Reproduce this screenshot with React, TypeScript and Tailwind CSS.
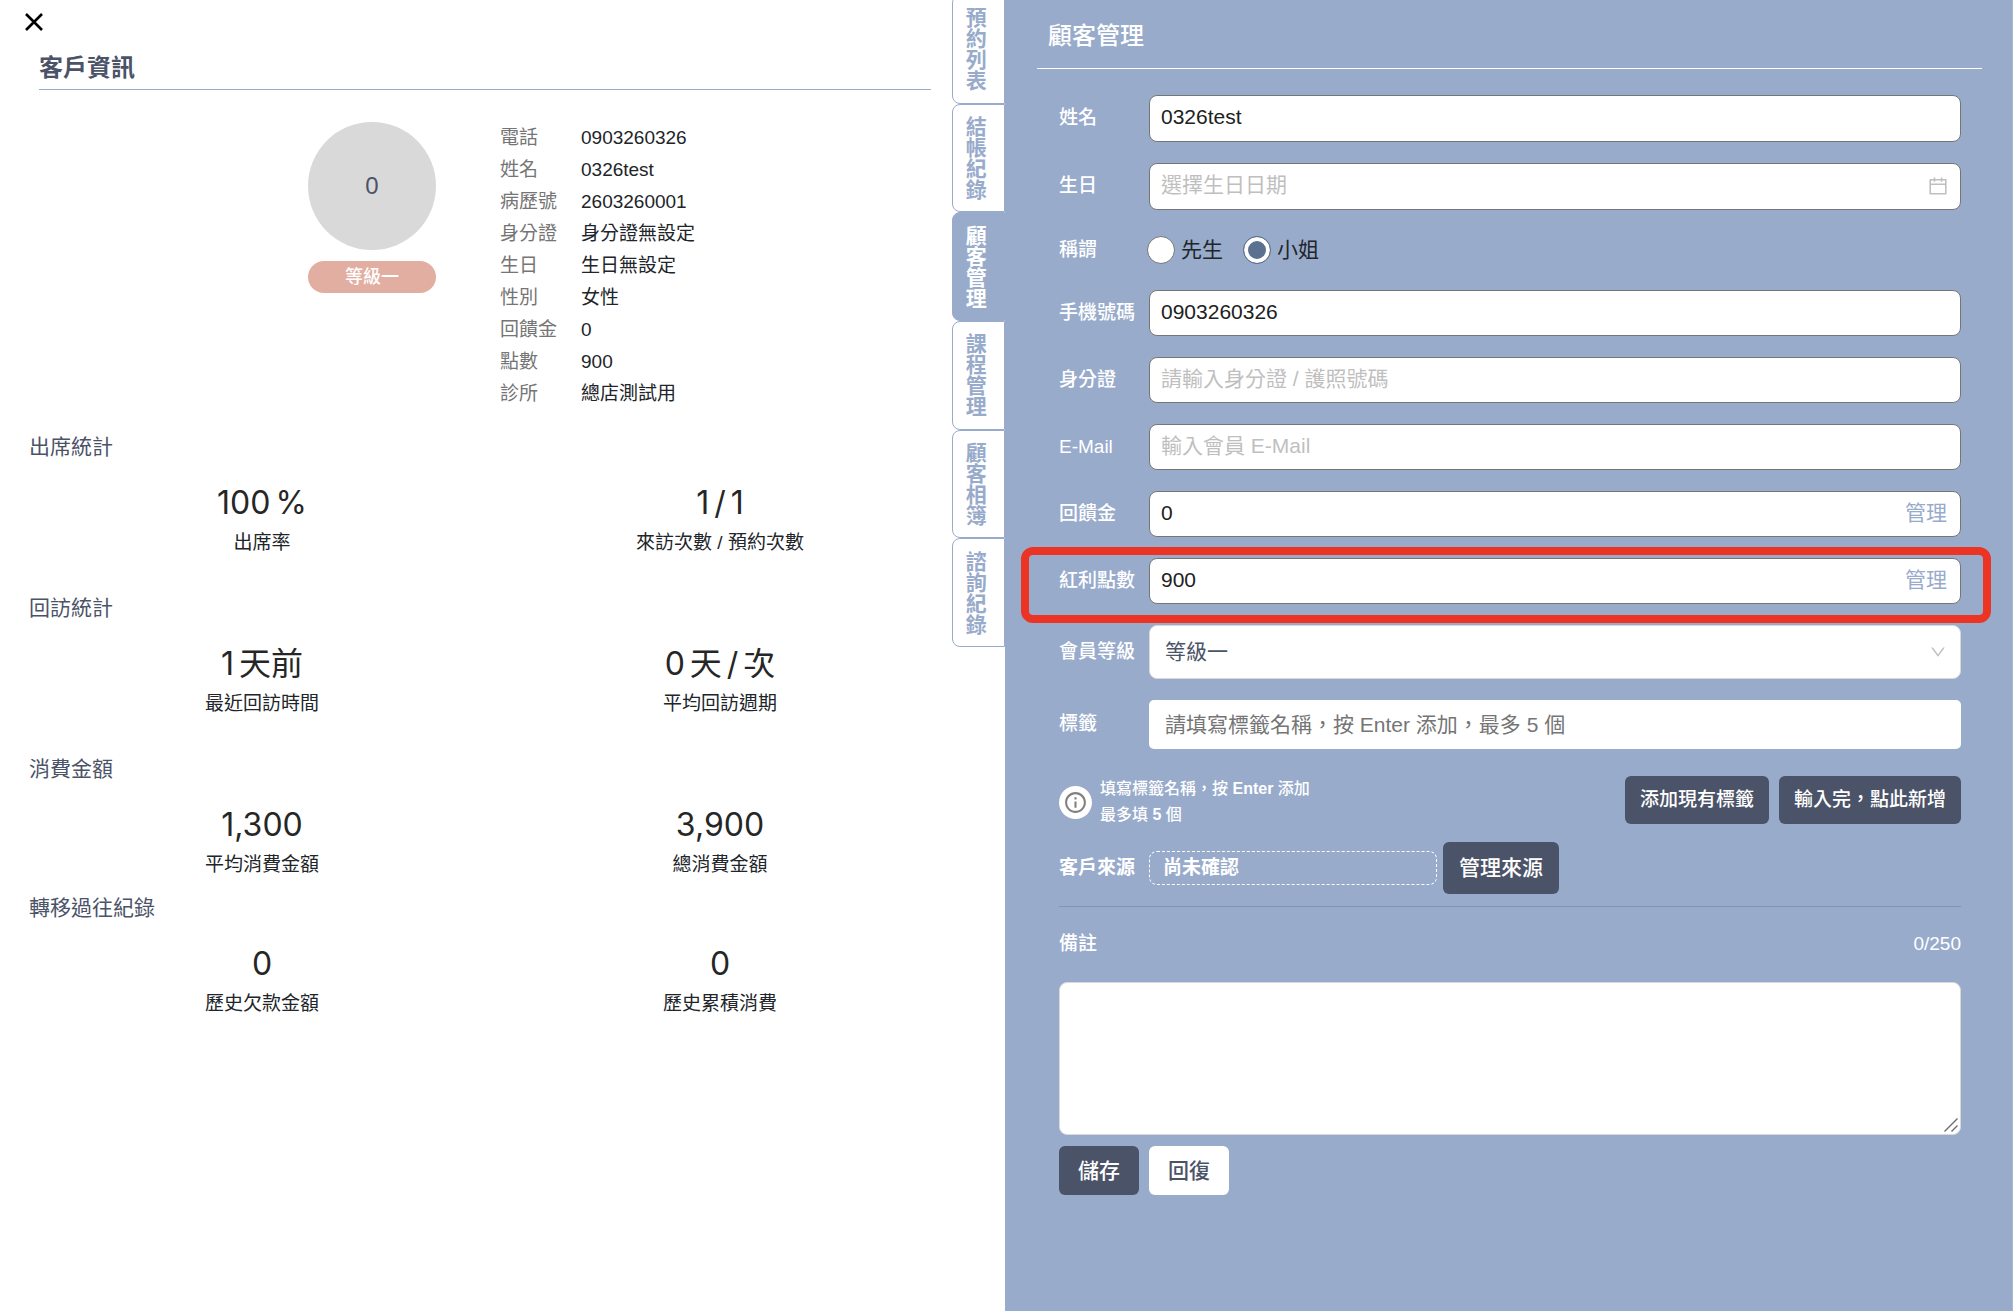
import { useState } from "react";
import type { ReactNode } from "react";
import { AiOutlineCalendar, AiOutlineDown } from "react-icons/ai";
import { MdInfoOutline } from "react-icons/md";

interface StatItem {
  value: string[];
  label: string;
}

interface StatSection {
  title: string;
  className: string;
  items: StatItem[];
}

const TABS = ["預約列表", "結帳紀錄", "顧客管理", "課程管理", "顧客相簿", "諮詢紀錄"];

const CUSTOMER_INFO = [
  { label: "電話", value: "0903260326" },
  { label: "姓名", value: "0326test" },
  { label: "病歷號", value: "2603260001" },
  { label: "身分證", value: "身分證無設定" },
  { label: "生日", value: "生日無設定" },
  { label: "性別", value: "女性" },
  { label: "回饋金", value: "0" },
  { label: "點數", value: "900" },
  { label: "診所", value: "總店測試用" },
];

const STATS: StatSection[] = [
  {
    title: "出席統計",
    className: "mt-[21px]",
    items: [
      { value: ["100", "%"], label: "出席率" },
      { value: ["1", "/", "1"], label: "來訪次數 / 預約次數" },
    ],
  },
  {
    title: "回訪統計",
    className: "mt-[33px]",
    items: [
      { value: ["1", "天前"], label: "最近回訪時間" },
      { value: ["0", "天", "/", "次"], label: "平均回訪週期" },
    ],
  },
  {
    title: "消費金額",
    className: "mt-[33px]",
    items: [
      { value: ["1,300"], label: "平均消費金額" },
      { value: ["3,900"], label: "總消費金額" },
    ],
  },
  {
    title: "轉移過往紀錄",
    className: "mt-[11px]",
    items: [
      { value: ["0"], label: "歷史欠款金額" },
      { value: ["0"], label: "歷史累積消費" },
    ],
  },
];

const labelClass = "text-[19px] font-medium text-white";
const inputClass =
  "w-full rounded-lg border border-[#767676] bg-white px-[11px] pb-[3px] text-[21px] text-[#212121] outline-none placeholder:text-[#bfbfbf]";
const darkButtonClass = "rounded-md bg-[#4b5368] font-medium text-white";

function FormRow({ id, label, children }: { id?: string; label: string; children: ReactNode }) {
  return (
    <div className="relative grid grid-cols-[90px_minmax(0,1fr)] items-center">
      {id ? (
        <label htmlFor={id} className={labelClass}>
          {label}
        </label>
      ) : (
        <span className={labelClass}>{label}</span>
      )}
      {children}
    </div>
  );
}

function BalanceField({ id, value }: { id: string; value: string }) {
  return (
    <div className="flex h-[46px] items-center rounded-lg border border-[#767676] bg-white pr-[13px] pb-0.5 pl-[11px]">
      <input
        id={id}
        defaultValue={value}
        className="min-w-0 flex-1 text-[21px] text-[#212121] outline-none"
      />
      <button type="button" className="text-[21px] text-[#98abcb]">
        管理
      </button>
    </div>
  );
}

function CustomerSummary() {
  return (
    <section className="min-w-0 flex-1">
      <button type="button" aria-label="關閉" className="ml-[25px] flex h-11 items-center">
        <svg viewBox="0 0 18 18" className="size-[18px]" fill="none" stroke="#000" strokeWidth="2.6">
          <path d="M1 1l16 16M17 1L1 17" />
        </svg>
      </button>
      <h2 className="mr-[21px] ml-[39px] border-b border-[#98abcb] pt-[3px] text-[24px] leading-[42px] font-bold text-[#4b5368]">
        客戶資訊
      </h2>

      <div className="mt-8 grid grid-cols-2">
        <div className="flex flex-col items-end gap-[11px] pr-10">
          <div className="flex size-32 items-center justify-center rounded-full bg-[#d9d9d9] text-[24px] text-[#4b5368]">
            0
          </div>
          <span className="w-32 rounded-full bg-[#e3aea2] text-center text-[18px] leading-8 font-medium text-white">
            等級一
          </span>
        </div>
        <dl className="grid grid-cols-[81px_minmax(0,1fr)] pl-6 text-[19px] leading-8">
          {CUSTOMER_INFO.map((row) => (
            <div key={row.label} className="contents">
              <dt className="text-[#757575]">{row.label}</dt>
              <dd className="text-[#212529]">{row.value}</dd>
            </div>
          ))}
        </dl>
      </div>

      {STATS.map((section) => (
        <div key={section.title} className={section.className}>
          <h3 className="ml-[29px] text-[21px] leading-8 text-[#4b5368]">{section.title}</h3>
          <div className="mt-4 mr-[3px] ml-[33px] grid grid-cols-2 text-center">
            {section.items.map((item) => (
              <div key={item.label}>
                <p className="flex justify-center gap-[5px] font-['Inter','Noto_Sans_CJK_TC',sans-serif] text-[32px] leading-[48px] text-[#262626]">
                  {item.value.map((part, idx) => (
                    <span key={idx}>{part}</span>
                  ))}
                </p>
                <p className="text-[19px] leading-8 text-[#212529]">{item.label}</p>
              </div>
            ))}
          </div>
        </div>
      ))}
    </section>
  );
}

function SideTabs() {
  const [active, setActive] = useState("顧客管理");

  return (
    <nav className="-mt-[5px] flex h-[652px] w-[53px] flex-col">
      {TABS.map((tab) => (
        <button
          key={tab}
          type="button"
          onClick={() => setActive(tab)}
          className={`flex flex-1 items-center justify-center rounded-l-lg border border-[#98abcb] pr-2 text-[21px] font-bold [writing-mode:vertical-rl] ${
            tab === active ? "bg-[#98abcb] text-white" : "bg-white text-[#98abcb]"
          }`}
        >
          {tab}
        </button>
      ))}
    </nav>
  );
}

function CustomerForm() {
  const [title, setTitle] = useState("小姐");
  const [note, setNote] = useState("");

  return (
    <main className="min-w-0 border-r border-[#a8b8d4] bg-[#98abcb]">
      <h1 className="mr-[30px] ml-8 border-b border-white pt-1 pl-[11px] text-[24px] leading-[64px] font-medium text-white">
        顧客管理
      </h1>

      <form className="mt-[26px] mr-[51px] ml-[54px]" onSubmit={(e) => e.preventDefault()}>
        <div className="flex flex-col gap-[21px]">
          <FormRow id="name" label="姓名">
            <input id="name" defaultValue="0326test" className={`h-[47px] ${inputClass}`} />
          </FormRow>
          <FormRow id="birthday" label="生日">
            <div className="relative">
              <input id="birthday" placeholder="選擇生日日期" className={`h-[47px] ${inputClass}`} />
              <AiOutlineCalendar className="pointer-events-none absolute top-3 right-3 size-[22px] text-[#bfbfbf]" />
            </div>
          </FormRow>
          <FormRow label="稱謂">
            <div className="-ml-0.5 flex h-[38px] items-center gap-5">
              {["先生", "小姐"].map((option) => (
                <label key={option} className="flex items-center gap-[6px] text-[21px] text-[#212529]">
                  <input
                    type="radio"
                    name="title"
                    value={option}
                    checked={title === option}
                    onChange={() => setTitle(option)}
                    className="size-7 appearance-none rounded-full border border-[#767676] bg-white checked:border-[#5a7190] checked:bg-[#5a7190] checked:shadow-[inset_0_0_0_4px_#fff]"
                  />
                  {option}
                </label>
              ))}
            </div>
          </FormRow>
          <FormRow id="phone" label="手機號碼">
            <input id="phone" defaultValue="0903260326" className={`h-[46px] ${inputClass}`} />
          </FormRow>
          <FormRow id="idNumber" label="身分證">
            <input id="idNumber" placeholder="請輸入身分證 / 護照號碼" className={`h-[46px] ${inputClass}`} />
          </FormRow>
          <FormRow id="email" label="E-Mail">
            <input id="email" placeholder="輸入會員 E-Mail" className={`h-[46px] ${inputClass}`} />
          </FormRow>
          <FormRow id="reward" label="回饋金">
            <BalanceField id="reward" value="0" />
          </FormRow>
          <FormRow id="points" label="紅利點數">
            <BalanceField id="points" value="900" />
            <div className="pointer-events-none absolute -top-[11px] -right-[30px] -bottom-[19px] -left-[38px] rounded-xl border-8 border-[#eb3423]" />
          </FormRow>
          <FormRow id="level" label="會員等級">
            <div className="relative">
              <select
                id="level"
                className="h-[54px] w-full appearance-none rounded-lg border border-[#d9d9d9] bg-white px-[15px] text-[21px] text-[#4b5368] outline-none"
              >
                <option>等級一</option>
              </select>
              <AiOutlineDown className="pointer-events-none absolute top-[18px] right-[14px] size-[18px] text-[#bfbfbf]" />
            </div>
          </FormRow>
          <FormRow id="tags" label="標籤">
            <input
              id="tags"
              placeholder="請填寫標籤名稱，按 Enter 添加，最多 5 個"
              className="h-[49px] w-full rounded-[5px] bg-white px-4 text-[21px] outline-none placeholder:text-[#757575]"
            />
          </FormRow>
        </div>

        <div className="mt-[27px] flex items-start">
          <span className="mt-[10px] flex size-[33px] items-center justify-center rounded-full bg-white">
            <MdInfoOutline className="size-[25px] text-[#808080]" />
          </span>
          <p className="ml-2 text-[16px] leading-[26px] font-medium text-white">
            填寫標籤名稱，按 <b>Enter</b> 添加
            <br />
            最多填 <b>5</b> 個
          </p>
          <div className="ml-auto flex gap-[10px]">
            <button type="button" className={`h-12 px-[15px] text-[19px] ${darkButtonClass}`}>
              添加現有標籤
            </button>
            <button type="button" className={`h-12 px-[15px] text-[19px] ${darkButtonClass}`}>
              輸入完，點此新增
            </button>
          </div>
        </div>

        <div className="mt-[14px] flex items-center border-b border-[#8294b4] pb-3">
          <span className="w-[90px] text-[19px] font-bold text-white">客戶來源</span>
          <span className="w-72 rounded-lg border border-dashed border-white px-[13px] text-[19px] leading-8 font-bold text-white">
            尚未確認
          </span>
          <button type="button" className={`ml-[6px] h-[52px] px-4 text-[21px] ${darkButtonClass}`}>
            管理來源
          </button>
        </div>

        <div className="flex h-[75px] items-center justify-between">
          <label htmlFor="note" className={labelClass}>
            備註
          </label>
          <span className={labelClass}>{note.length}/250</span>
        </div>
        <div className="relative">
          <textarea
            id="note"
            maxLength={250}
            value={note}
            onChange={(e) => setNote(e.target.value)}
            className="block h-[153px] w-full rounded-lg border border-[#d9d9d9] bg-white p-3 text-[21px] outline-none [&::-webkit-resizer]:bg-transparent"
          />
          <svg
            viewBox="0 0 14 14"
            className="pointer-events-none absolute right-[3px] bottom-[3px] size-[14px]"
            fill="none"
            stroke="#6b6b6b"
            strokeWidth="1.4"
          >
            <path d="M0.5 13.5L13.5 0.5M7.5 13.5L13.5 7.5" />
          </svg>
        </div>

        <div className="mt-[11px] flex gap-[10px]">
          <button type="submit" className={`h-[49px] w-20 text-[21px] ${darkButtonClass}`}>
            儲存
          </button>
          <button type="reset" className="h-[49px] w-20 rounded-md bg-white text-[21px] font-medium text-[#4b5368]">
            回復
          </button>
        </div>
      </form>
    </main>
  );
}

export default function App() {
  return (
    <div className="grid min-h-screen grid-cols-[minmax(0,1005fr)_minmax(0,1008fr)] bg-white font-['Liberation_Sans','Noto_Sans_CJK_TC',sans-serif]">
      <div className="flex items-start">
        <CustomerSummary />
        <SideTabs />
      </div>
      <CustomerForm />
    </div>
  );
}
